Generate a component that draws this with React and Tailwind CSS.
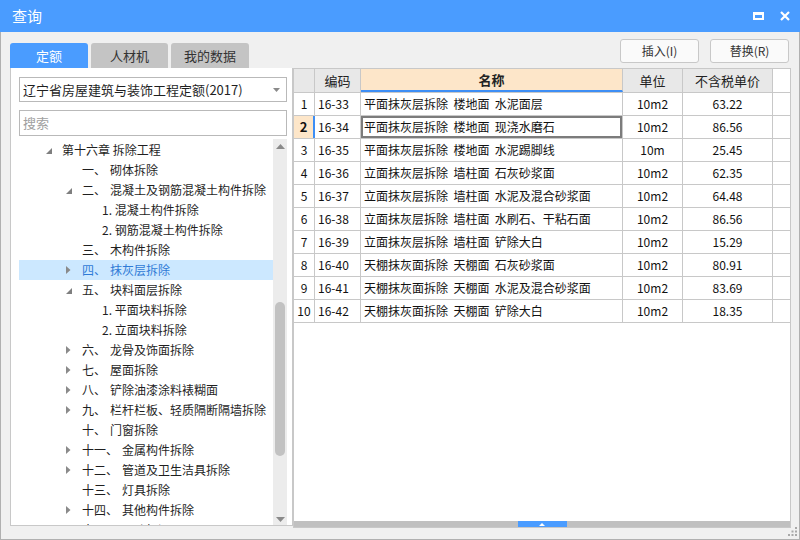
import React from 'react';

const treeRows = [
  { level: 0, arrow: 'open', text: '第十六章 拆除工程' },
  { level: 1, prefix: '一、', text: '砌体拆除' },
  { level: 1, arrow: 'open', prefix: '二、', text: '混凝土及钢筋混凝土构件拆除' },
  { level: 2, text: '1. 混凝土构件拆除' },
  { level: 2, text: '2. 钢筋混凝土构件拆除' },
  { level: 1, prefix: '三、', text: '木构件拆除' },
  { level: 1, arrow: 'closed', prefix: '四、', text: '抹灰层拆除', selected: true },
  { level: 1, arrow: 'open', prefix: '五、', text: '块料面层拆除' },
  { level: 2, text: '1. 平面块料拆除' },
  { level: 2, text: '2. 立面块料拆除' },
  { level: 1, arrow: 'closed', prefix: '六、', text: '龙骨及饰面拆除' },
  { level: 1, arrow: 'closed', prefix: '七、', text: '屋面拆除' },
  { level: 1, arrow: 'closed', prefix: '八、', text: '铲除油漆涂料裱糊面' },
  { level: 1, arrow: 'closed', prefix: '九、', text: '栏杆栏板、轻质隔断隔墙拆除' },
  { level: 1, prefix: '十、', text: '门窗拆除' },
  { level: 1, arrow: 'closed', prefix: '十一、', text: '金属构件拆除' },
  { level: 1, arrow: 'closed', prefix: '十二、', text: '管道及卫生洁具拆除' },
  { level: 1, prefix: '十三、', text: '灯具拆除' },
  { level: 1, arrow: 'closed', prefix: '十四、', text: '其他构件拆除' },
  { level: 1, arrow: 'closed', prefix: '十五、', text: '开孔打洞' },
];

const rows = [
  ['16-33', '平面抹灰层拆除  楼地面  水泥面层', '10m2', '63.22'],
  ['16-34', '平面抹灰层拆除  楼地面  现浇水磨石', '10m2', '86.56'],
  ['16-35', '平面抹灰层拆除  楼地面  水泥踢脚线', '10m', '25.45'],
  ['16-36', '立面抹灰层拆除  墙柱面  石灰砂浆面', '10m2', '62.35'],
  ['16-37', '立面抹灰层拆除  墙柱面  水泥及混合砂浆面', '10m2', '64.48'],
  ['16-38', '立面抹灰层拆除  墙柱面  水刷石、干粘石面', '10m2', '86.56'],
  ['16-39', '立面抹灰层拆除  墙柱面  铲除大白', '10m2', '15.29'],
  ['16-40', '天棚抹灰面拆除  天棚面  石灰砂浆面', '10m2', '80.91'],
  ['16-41', '天棚抹灰面拆除  天棚面  水泥及混合砂浆面', '10m2', '83.69'],
  ['16-42', '天棚抹灰面拆除  天棚面  铲除大白', '10m2', '18.35'],
];

const indents = ['pl-[27px]', 'pl-[47px]', 'pl-[67px]'];

const TreeArrow = ({ kind }) => {
  if (kind === 'open') {
    return (
      <svg width="6" height="6" viewBox="0 0 6 6" className="mt-[1px]">
        <polygon points="6,0 6,6 0,6" fill="#7f7f7f" />
      </svg>
    );
  }
  if (kind === 'closed') {
    return (
      <svg width="5" height="8" viewBox="0 0 5 8">
        <polygon points="0,0 4.5,4 0,8" fill="#8a8a8a" />
      </svg>
    );
  }
  return null;
};

const TreeRow = ({ row }) => (
  <div
    className={`h-[20px] flex items-center ${indents[row.level]} ${
      row.selected ? 'bg-[#cce8ff] text-[#2f7ad6]' : 'text-[#1f1f1f]'
    }`}
  >
    <div className="w-[16px] flex items-center">
      <TreeArrow kind={row.arrow} />
    </div>
    {row.prefix && <span>{row.prefix}</span>}
    <span className={row.prefix ? 'ml-[4px] whitespace-nowrap' : 'whitespace-nowrap'}>{row.text}</span>
  </div>
);

const App = () => {
  return (
    <div className="w-[800px] h-[540px] flex flex-col overflow-hidden font-['Noto_Sans_CJK_SC',sans-serif] relative">
      {/* title bar */}
      <div className="h-[32px] bg-[#4a9cff] flex items-center pl-[12px] pr-[10px] text-white text-[15px]">
        <span>查询</span>
        <div className="ml-auto flex items-center gap-[16px]">
          <div className="w-[11px] h-[8px] border-2 border-white border-t-[3px]" />
          <svg width="10" height="10" viewBox="0 0 10 10">
            <path d="M1 1 L9 9 M9 1 L1 9" stroke="#fff" strokeWidth="2.2" />
          </svg>
        </div>
      </div>

      {/* body */}
      <div className="flex-1 bg-[#f0f0f0] border-x border-b border-[#b0b0b0] flex flex-col pl-[9px] pr-[8px]">
        {/* tabs + buttons */}
        <div className="h-[36px] flex">
          <div className="self-end flex gap-[3px] text-[13px]">
            <div className="w-[78px] h-[25px] bg-[#4a9cff] text-white rounded-t-[3px] flex items-center justify-center">定额</div>
            <div className="w-[77px] h-[25px] bg-[#c4c4c4] text-[#333] rounded-t-[3px] flex items-center justify-center">人材机</div>
            <div className="w-[78px] h-[25px] bg-[#c4c4c4] text-[#333] rounded-t-[3px] flex items-center justify-center">我的数据</div>
          </div>
          <div className="ml-auto mt-[7px] mr-[2px] flex gap-[11px] text-[12px] text-[#333]">
            <button className="w-[79px] h-[24px] bg-[#fafafa] border border-[#c8c8c8] rounded-[3px]">插入(I)</button>
            <button className="w-[79px] h-[24px] bg-[#fafafa] border border-[#c8c8c8] rounded-[3px]">替换(R)</button>
          </div>
        </div>

        {/* main */}
        <div className="flex items-start">
          {/* left panel */}
          <div className="w-[283px] h-[458px] bg-white border-x border-b border-[#c8c8c8] flex flex-col pl-[8px] pr-[5px] pt-[9px]">
            <div className="h-[25px] border border-[#b9b9b9] flex items-center pl-[3px] pr-[6px] text-[13px] text-[#1f1f1f]">
              <span>辽宁省房屋建筑与装饰工程定额(2017)</span>
              <svg width="7" height="4" viewBox="0 0 7 4" className="ml-auto">
                <polygon points="0,0 7,0 3.5,4" fill="#8a8a8a" />
              </svg>
            </div>
            <div className="mt-[8px] h-[26px] border border-[#b9b9b9] flex items-center pl-[3px] text-[13px] text-[#a0a0a0]">
              搜索
            </div>
            <div className="mt-[3px] flex-1 flex min-h-0">
              <div className="flex-1 overflow-hidden pt-[1px] text-[12px]">
                {treeRows.map((r, i) => (
                  <TreeRow key={i} row={r} />
                ))}
              </div>
              <div className="w-[14px] bg-[#ececec] flex flex-col items-center">
                <svg width="9" height="5" viewBox="0 0 9 5" className="mt-[5px]">
                  <polygon points="0,5 9,5 4.5,0" fill="#8a8a8a" />
                </svg>
                <div className="mt-[153px] w-[10px] h-[154px] rounded-full bg-[#c2c2c2]" />
                <svg width="9" height="5" viewBox="0 0 9 5" className="mt-auto mb-[3px]">
                  <polygon points="0,0 9,0 4.5,5" fill="#8a8a8a" />
                </svg>
              </div>
            </div>
          </div>

          {/* right panel */}
          <div className="w-[498px] h-[460px] bg-white border border-[#c8c8c8] flex flex-col">
            <div className="flex-1 text-[12px] text-[#111]">
              <div className="flex h-[24px] border-b border-[#c8c8c8] text-[13px] text-[#222]">
                <div className="w-[21px] bg-[#e8e8e8] border-r border-[#c8c8c8]" />
                <div className="w-[46px] bg-[#e8e8e8] border-r border-[#c8c8c8] flex items-center justify-center">编码</div>
                <div className="w-[262px] bg-[#fde6c9] border-r border-[#c8c8c8] border-b-2 border-b-[#3d8ef5] flex items-center justify-center font-bold">名称</div>
                <div className="w-[60px] bg-[#e8e8e8] border-r border-[#c8c8c8] flex items-center justify-center">单位</div>
                <div className="w-[90px] bg-[#e8e8e8] border-r border-[#c8c8c8] flex items-center justify-center">不含税单价</div>
              </div>
              {rows.map((r, i) => {
                const active = i === 1;
                return (
                  <div key={i} className="flex h-[23px] border-b border-[#c8c8c8]">
                    <div
                      className={`w-[21px] border-r flex items-center justify-center ${
                        active ? 'bg-[#fde6c9] border-r-2 border-[#3d8ef5] font-bold text-[13px]' : 'border-[#c8c8c8]'
                      }`}
                    >
                      {i + 1}
                    </div>
                    <div className="w-[46px] border-r border-[#c8c8c8] flex items-center pl-[3px]">{r[0]}</div>
                    <div
                      className={`w-[262px] border-r border-[#c8c8c8] flex items-center pl-[3px] whitespace-pre ${
                        active ? 'ring-2 ring-inset ring-[#7c7c7c]' : ''
                      }`}
                    >
                      {r[1]}
                    </div>
                    <div className="w-[60px] border-r border-[#c8c8c8] flex items-center justify-center">{r[2]}</div>
                    <div className="w-[90px] border-r border-[#c8c8c8] flex items-center justify-center">{r[3]}</div>
                  </div>
                );
              })}
            </div>
            <div className="h-[6px] bg-[#c0c0c0] flex justify-center">
              <div className="w-[49px] h-[6px] bg-[#4a9cff] flex items-center justify-center">
                <svg width="6" height="3" viewBox="0 0 6 3">
                  <polygon points="0,3 6,3 3,0" fill="#fff" />
                </svg>
              </div>
            </div>
          </div>
        </div>
      </div>

      {/* resize grip */}
      <svg width="10" height="10" viewBox="0 0 10 10" className="absolute right-[2px] bottom-[3px]">
        <rect x="7" y="0" width="2" height="2" fill="#a8a8a8" />
        <rect x="3.5" y="3.5" width="2" height="2" fill="#a8a8a8" />
        <rect x="7" y="3.5" width="2" height="2" fill="#a8a8a8" />
        <rect x="0" y="7" width="2" height="2" fill="#a8a8a8" />
        <rect x="3.5" y="7" width="2" height="2" fill="#a8a8a8" />
        <rect x="7" y="7" width="2" height="2" fill="#a8a8a8" />
      </svg>
    </div>
  );
};

export default App;
